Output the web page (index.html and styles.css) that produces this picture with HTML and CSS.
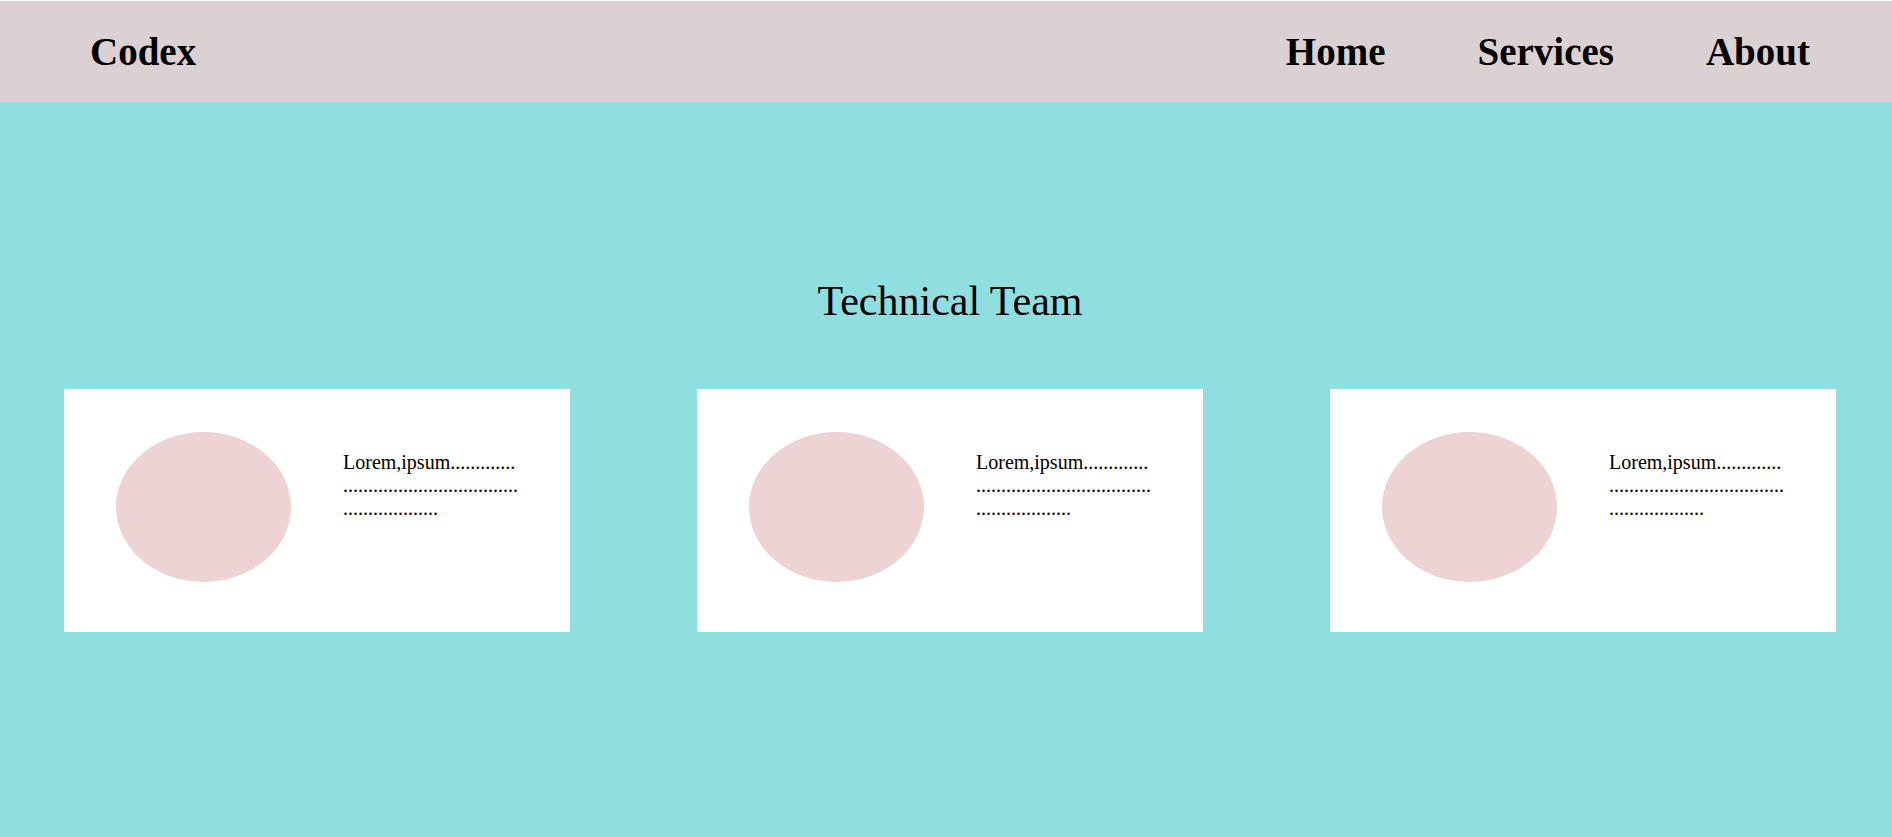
FILE: index.html
```html
<!DOCTYPE html>
<html lang="en">
<head>
<meta charset="utf-8">
<title>Codex</title>
<link rel="stylesheet" href="styles.css">
</head>
<body>
<header class="navbar">
  <div class="logo">Codex</div>
  <nav>
    <ul class="nav-links">
      <li><a href="#">Home</a></li>
      <li><a href="#">Services</a></li>
      <li><a href="#">About</a></li>
    </ul>
  </nav>
</header>
<main class="team">
  <h2 class="team-title">Technical Team</h2>
  <div class="cards">
    <div class="card">
      <div class="avatar"></div>
      <p class="card-text">Lorem,ipsum............. ................................... ...................</p>
    </div>
    <div class="card">
      <div class="avatar"></div>
      <p class="card-text">Lorem,ipsum............. ................................... ...................</p>
    </div>
    <div class="card">
      <div class="avatar"></div>
      <p class="card-text">Lorem,ipsum............. ................................... ...................</p>
    </div>
  </div>
</main>
</body>
</html>
```

FILE: styles.css
```css
html {
  background: #ffffff;
}

body {
  margin: 1px 0 0 0;
  min-height: 836px;
  background: #8fdfe0;
  font-family: "Liberation Serif", "Times New Roman", serif;
  color: #000;
}

.navbar {
  height: 101px;
  background: #dbd1d2;
  display: flex;
  align-items: center;
  justify-content: space-between;
  padding: 0 82px 0 90px;
}

.logo {
  font-size: 39px;
  font-weight: bold;
}

.nav-links {
  list-style: none;
  margin: 0;
  padding: 0;
  display: flex;
  gap: 92px;
}

.nav-links a {
  font-size: 39px;
  font-weight: bold;
  color: #000;
  text-decoration: none;
}

.team {
  padding: 175px 56px 0 64px;
}

.team-title {
  margin: 0 0 64px 0;
  font-size: 42px;
  font-weight: normal;
  text-align: center;
}

.cards {
  display: flex;
  gap: 127px;
}

.card {
  width: 506px;
  height: 243px;
  box-sizing: border-box;
  background: #ffffff;
  display: flex;
  align-items: flex-start;
  padding: 43px 0 0 52px;
}

.avatar {
  width: 175px;
  height: 150px;
  border-radius: 50%;
  background: #eed3d4;
  flex-shrink: 0;
}

.card-text {
  margin: 19px 0 0 52px;
  width: 180px;
  font-size: 20px;
}
```
